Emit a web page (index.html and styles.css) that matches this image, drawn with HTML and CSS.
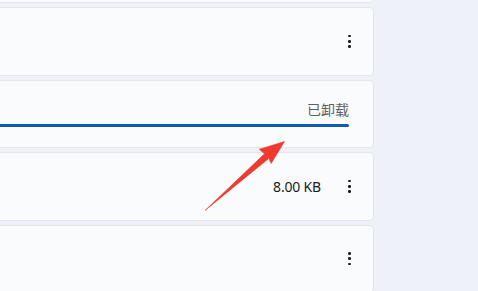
FILE: index.html
```html
<!DOCTYPE html>
<html lang="zh-CN">
<head>
<meta charset="utf-8">
<link rel="stylesheet" href="styles.css">
</head>
<body>
<div class="list">
  <div class="card">
    <div class="spacer"></div>
    <div class="more"><span></span><span></span><span></span></div>
  </div>
  <div class="card">
    <div class="spacer"></div>
    <div class="more"><span></span><span></span><span></span></div>
  </div>
  <div class="card card-progress">
    <div class="status">已卸载</div>
    <div class="bar"></div>
  </div>
  <div class="card">
    <div class="spacer"></div>
    <div class="size">8.00 KB</div>
    <div class="more"><span></span><span></span><span></span></div>
  </div>
  <div class="card">
    <div class="spacer"></div>
    <div class="more"><span></span><span></span><span></span></div>
  </div>
</div>
<svg class="arrow" width="478" height="291" viewBox="0 0 478 291">
  <polygon points="205,210.5 264.5,153.8 259.3,149.3 284.5,141.5 271.2,163.5 268.8,158.4" fill="#ef3a31" stroke="#ef3a31" stroke-width="0.6" stroke-linejoin="round"/>
</svg>
</body>
</html>
```
FILE: styles.css
```css
html, body {
  margin: 0;
  padding: 0;
}
body {
  width: 478px;
  height: 291px;
  overflow: hidden;
  background: #eef1f8;
  font-family: "Noto Sans", "Noto Sans CJK SC", sans-serif;
  position: relative;
}
.list {
  width: 374px;
  margin-top: -65.5px;
  display: flex;
  flex-direction: column;
  gap: 4px;
}
.card {
  height: 68.5px;
  box-sizing: border-box;
  background: #fafbfd;
  border: 1px solid #e3e5ea;
  border-left: none;
  border-radius: 0 5px 5px 0;
  display: flex;
  align-items: center;
  padding-right: 22.5px;
}
.spacer {
  flex: 1;
}
.more {
  width: 2.6px;
  display: flex;
  flex-direction: column;
  gap: 2.6px;
}
.more span {
  width: 2.6px;
  height: 2.6px;
  border-radius: 50%;
  background: #1b1b1b;
}
.size {
  font-size: 14px;
  color: #1c1c1c;
  margin-right: 27px;
  letter-spacing: -0.2px;
}
.card-progress {
  flex-direction: column;
  align-items: stretch;
  padding-right: 24px;
  padding-top: 20px;
}
.status {
  align-self: flex-end;
  font-family: "Noto Sans CJK SC", sans-serif;
  font-size: 14px;
  line-height: 17px;
  color: #606060;
}
.bar {
  margin-top: 6.5px;
  height: 3px;
  background: #0f5cb4;
  border-radius: 0 2px 2px 0;
}
.arrow {
  position: absolute;
  left: 0;
  top: 0;
  pointer-events: none;
}
```
